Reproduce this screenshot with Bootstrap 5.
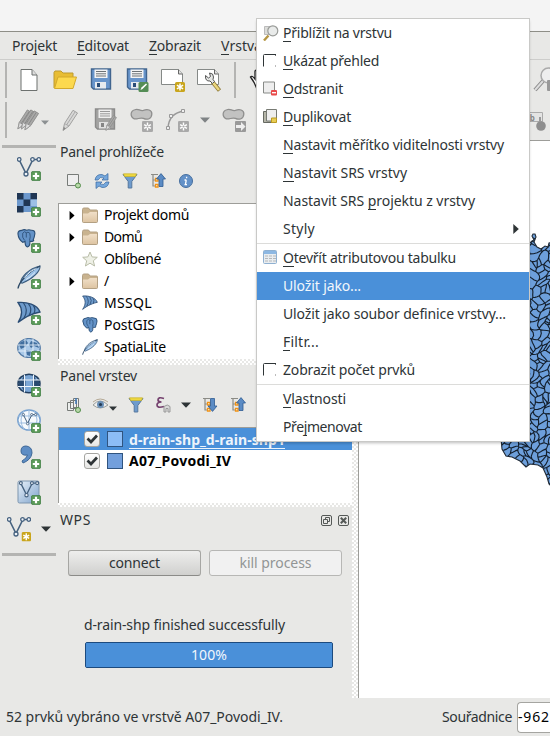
<!DOCTYPE html>
<html lang="cs">
<head>
<meta charset="utf-8">
<title>QGIS</title>
<link href="https://cdn.jsdelivr.net/npm/bootstrap@5.3.0/dist/css/bootstrap.min.css" rel="stylesheet">
<style>
body{width:550px;height:736px;overflow:hidden;background:#e8e8e6;color:#2e3436;font:14px/22px "Noto Sans","Open Sans",sans-serif}
svg{display:block;flex:none;overflow:visible}
.fit{white-space:pre;display:inline-block}
u{text-decoration:none;box-shadow:0 1px 0 #2e3436;display:inline-block;line-height:17px}
.titlebar{height:32px;background:#f4f4f4;border-bottom:1px solid #8e8e87}
.menubar{height:28px;border-bottom:1px solid #cdcdcb;padding-left:12px;gap:20px}
.tools{height:40px;padding-left:5px}
.grip{width:2px;height:36px;background:#b4b4b2;flex:none}
.cell36{width:36px;height:36px;display:flex;align-items:center;justify-content:center;flex:none}
.side{width:58px}
.hbar{height:3px;width:54px;background:#b4b4b2;margin-left:2px}
.panels{width:294px}
.ptitle{height:25px;padding:1px 0 0 2px}
.icons{height:33px;padding-left:8px}
.tree{height:156px;background:#fff;border:1px solid #9d9d99;border-width:1px 0 0 1px;color:#000}
.tree>div,.layers>div{height:22px}
.dots{background-color:#e8e8e6;background-image:radial-gradient(circle at 1px 1px,#fff 0 .8px,transparent 1px),radial-gradient(circle at 3px 3px,#fff 0 .8px,transparent 1px);background-size:4px 4px}
.layers{height:76px;background:#fff;border:1px solid #9d9d99;border-width:1px 0 0 1px;color:#000;font-weight:700}
.chk{width:16px;height:16px;border:1px solid #a5a5a1;border-radius:3px;background:linear-gradient(#fff,#e6e6e4)}
.swatch{width:16px;height:16px;border:1px solid #30547f;background:#729fdc;margin:0 6px 0 7px}
.picked{background:#4a90d9;color:#eef4fb}
.picked .swatch{background:#8cbdf6}
.picked .fit{box-shadow:0 1px 0 #eef4fb;line-height:17px}
.qbtn{width:133px;height:26px;padding:0;font-size:14px;line-height:22px;border:1px solid #a6a6a3;border-bottom-color:#8b8b88;border-radius:3px;background:linear-gradient(#eeeeed,#d0d0ce);color:#2e3436}
.qbtn:disabled{background:#f1f1f1;border-color:#b7b7b5;color:#929595;opacity:1}
.qbar{width:248px;height:26px;border:1px solid #1c4a7e;border-radius:2px;background:#4a90d9;font-size:14px}
.qbar .progress-bar{background:#4a90d9;color:#f2f7fc}
.map{border:1px solid #9d9d99;border-width:1px 0 0 1px;background:#fff;overflow:hidden}
.status{height:38px;padding-left:6px}
.coord{width:33px;height:31px;border:1px solid #a5a5a1;border-right:0;border-radius:4px 0 0 4px;background:#fff;color:#000}
.ctx{position:absolute;left:257px;top:19px;width:272px;min-width:0;height:422px;padding:0;margin:0;border:0;border-radius:0;background:#fff;font-size:14px;color:#2e3436;box-shadow:0 0 0 1px #c9c9c7,0 2px 3px #0004}
.ctx .dropdown-item{height:28px;padding:0 0 0 6px;display:flex;align-items:center;color:#2e3436;line-height:22px}
.ctx .dropdown-item.active{background:#4a90d9;color:#f2f7fc}
.ctx .dropdown-divider{margin:0;border-top:1px solid #dcdcda;opacity:1;height:1px}
.slot{width:20px;height:16px;flex:none}
.behind{position:absolute;left:526px;top:60px}
.hand{position:absolute;left:248px;top:66px}
</style>
<script src="https://cdn.jsdelivr.net/npm/bootstrap@5.3.0/dist/js/bootstrap.bundle.min.js"></script>
</head>
<body>
<svg width="0" height="0" class="position-absolute">
<defs>
<linearGradient id="sky" x2="1" y2="1"><stop stop-color="#e8f1fa"/><stop offset="1" stop-color="#7fa3cb"/></linearGradient>
<linearGradient id="fold" y2="1" x2="0"><stop stop-color="#f0dfc8"/><stop offset="1" stop-color="#dec5a3"/></linearGradient>
<symbol id="plus" viewBox="0 0 10 10"><rect x=".4" y=".4" width="9.2" height="9.2" rx="1.6" fill="#5b9a58" stroke="#3f7d44" stroke-width=".8"/><path d="M5 1.800v6.400M1.800 5h6.400" stroke="#fff" stroke-width="2.200"/></symbol>
<symbol id="star" viewBox="0 0 10 10"><rect width="10" height="10" rx="1.6" fill="#c9a51c"/><path d="M5 1.4v7.2M1.9 3.2l6.2 3.6M1.9 6.8l6.2-3.6" stroke="#fff" stroke-width="1.5"/></symbol>
<symbol id="gstar" viewBox="0 0 10 10"><rect width="10" height="10" rx="1.2" fill="#a9a9a9"/><path d="M5 1.4v7.2M1.9 3.2l6.2 3.6M1.9 6.8l6.2-3.6" stroke="#fff" stroke-width="1.3"/><circle cx="5" cy="5" r="1" fill="#a9a9a9"/></symbol>
<symbol id="vee" viewBox="0 0 24 24"><path d="M2.5 3.5 9 16.500 15.700 3M17 2.500h3" fill="none" stroke="#45617f" stroke-width="1.6"/><g fill="#eef2f7" stroke="#45617f" stroke-width="1.3"><circle cx="2.200" cy="2.500" r="1.800"/><circle cx="15.500" cy="2.500" r="1.800"/><circle cx="21.800" cy="2.500" r="1.800"/><circle cx="9" cy="17" r="2"/></g></symbol>
<symbol id="elephant" viewBox="0 0 20 20"><path d="M1 5Q1 1.500 5 1.500Q7.500 0 10 1.300Q12.500 .3 15 1.300Q19 1 18.800 5Q18.300 9 17 11.500Q18.500 12.500 16 13L13.500 12.800Q14 18.500 10.800 18.800Q8.500 18.500 8.500 13L6 14Q1.500 11 1 5Z" fill="#6493c8" stroke="#2b4f77" stroke-width="1.200"/><path d="M6 4.500Q5 9 8 12M13.500 4.500Q14.500 8 13.200 12M6 4.500Q8 1.500 9.800 4V9M13.500 4.500Q11.500 2.500 9.800 4" fill="none" stroke="#2b4f77" stroke-width=".9"/></symbol>
<symbol id="feather" viewBox="0 0 24 24"><path d="M3.500 17.500C4 13 11 3.500 23 1C23.500 6 16 14 5 18.200Z" fill="#9cc1e6" stroke="#3c5c7e" stroke-width="1.100"/><path d="M1 23.500C2 17 10 8 23 1" fill="none" stroke="#2e4a67" stroke-width="1.400"/><path d="M7.500 13C11 8 15 5 19.500 3.500M9 14.500Q14 12 18 7.500" stroke="#dcebf9" fill="none"/></symbol>
<symbol id="fin" viewBox="0 0 24 24"><path d="M1 1.500C10 .8 20 3.500 23 11C18 12 9 15 1 21.500C6 14 6 8 1 1.500Z" fill="#6e9bcc" stroke="#2b4d75" stroke-width="1.300"/><path d="M6.500 2Q12 9 7 17M11.500 2.800Q16 8 12 14.500M16.500 4.800Q19 8 17 12.500" fill="none" stroke="#2b4d75" stroke-width="1.200"/></symbol>
<symbol id="floppy" viewBox="0 0 22 22"><path d="M1.500 1H20.500V21H3.500L1.500 19Z" fill="#6895cb" stroke="#41658f" stroke-width="1.400"/><path d="M4.500 1.500h13v8.500h-13Z" fill="#f4f4f4"/><path d="M6 3.500h10M6 5.800h10M6 8h10" stroke="#6d7376"/><path d="M5 14h11v6.500H5Z" fill="#e7ebef"/><path d="M7 15h3v4H7Z" fill="#294d78"/></symbol>
<symbol id="gfloppy" viewBox="0 0 22 22"><path d="M1.500 1H20.500V21H3.500L1.500 19Z" fill="#a3a3a2" stroke="#8b8b8a" stroke-width="1.400"/><path d="M4.500 1.500h13v8.500h-13Z" fill="#eee"/><path d="M6 3.500h10M6 5.800h10M6 8h10" stroke="#999"/><path d="M5 14h11v6.500H5Z" fill="#e1e1e1"/><path d="M7 15h3v4H7Z" fill="#858585"/></symbol>
<symbol id="gpencil" viewBox="0 0 16 22"><path d="M1 21 2.500 14 11 .8 15.500 3.500 7 16.500Z" fill="#d8d8d7" stroke="#a0a09f"/><path d="M1 21l.8-3.500 2 1.300Z" fill="#888"/><path d="M4.500 15.500 13 2.500M2.500 14l4.500 2.500" stroke="#aaa"/></symbol>
<symbol id="dpencil" viewBox="0 0 16 22"><path d="M1 21 2.500 14 11 .8 15.500 3.500 7 16.500Z" fill="#a9a9a8" stroke="#8c8c8b"/><path d="M2.500 14 1 21l6-4.500Z" fill="#ddd" stroke="#999"/><path d="M4.500 15.500 13 2.500" stroke="#858585"/></symbol>
<symbol id="blob" viewBox="0 0 24 14"><path d="M5 1.500C9 0 10 3 14 2.200C18 .5 23 1.500 22.800 6C22.500 11 18 12.500 14 10.500C10 9 8 12 4.500 11C0 9 0 3 5 1.500Z" fill="#c2c2c1" stroke="#8e8e8d" stroke-width="1.300"/></symbol>
<symbol id="folder" viewBox="0 0 16 16"><path d="M.5 14.500V2.500Q.5 1 2 1H6.500L8 3H14.500Q15.500 3 15.500 4V14.500Q15.500 15.500 14.500 15.500H1.500Q.5 15.500.5 14.500Z" fill="#c9b38f" stroke="#b3a083"/><path d="M1 15V6.500H6L8 5H15V15Z" fill="url(#fold)"/></symbol>
<symbol id="funnel" viewBox="0 0 16 16"><path d="M1 1.500H15L9.800 8.500V15H6.200V8.500Z" fill="#6e9bcd" stroke="#56789f"/><path d="M1.500.8H14.500L13.500 3.500H2.500Z" fill="#eed840" stroke="#c9b32c" stroke-width=".7"/></symbol>
<symbol id="treeicon" viewBox="0 0 18 16"><path d="M1 1.500H8M3 1.500V13H6M3 7H6" stroke="#8b8b85" fill="none" stroke-width="1.200"/><path d="M5.500 5.500h2.500v2.500H5.500ZM5.500 11.500h2.500v2.500H5.500Z" fill="#fff" stroke="#f09216" stroke-width="1.300"/></symbol>
<symbol id="up" viewBox="0 0 10 14"><path d="M5 .6 9.500 6H7V13.500H3V6H.5Z" fill="#5b8bc4" stroke="#2e5c92" stroke-width=".8"/></symbol>
<symbol id="globe" viewBox="0 0 24 20"><ellipse cx="12" cy="10" rx="11.300" ry="9.500" fill="#aac9e8" stroke="#547ba6" stroke-width="1.200"/><path d="M4 4l5-2 2 3-3 4-4 2-2-4ZM14 3l6 2 2 5-5-2-3 2-2-3ZM9 12l5 1-1 5-3-1ZM16 12h4l-2 4Z" fill="#426f9f"/><path d="M1 7h22M1 13h22M8 1v18M16 1v18" stroke="#e7f1fb" stroke-width=".9"/></symbol>
<symbol id="globe2" viewBox="0 0 24 20"><ellipse cx="12" cy="10" rx="11" ry="9.300" fill="#7ca7d6" stroke="#233f60" stroke-width="1.500"/><path d="M2 6.500h20v6H2Z" fill="#294a70"/><path d="M8.500 6.500h7v6h-7Z" fill="#7ca7d6"/><path d="M8 1Q3 10 8 19M16 1Q21 10 16 19" fill="none" stroke="#294a70" stroke-width="1.500"/><path d="M1 6.500h22M1 13h22M7.500 1v18M16.500 1v18" stroke="#eff5fb" stroke-width="1.100"/></symbol>
<symbol id="globe3" viewBox="0 0 24 22"><ellipse cx="12" cy="11" rx="11.200" ry="10" fill="#f7fafd" stroke="#77a1cf" stroke-width="1.500"/><path d="M1 7h22M1 14h22M12 1v20M7 1.500Q1 11 7 20.500M17 1.500Q23 11 17 20.500" stroke="#9dbde0" fill="none"/></symbol>
<symbol id="tri" viewBox="0 0 10 6"><path d="M0 .5H10L5 5.800Z"/></symbol>
<symbol id="rtri" viewBox="0 0 6 10"><path d="M.3 0 5.800 5 .3 10Z"/></symbol>
<symbol id="tick" viewBox="0 0 14 14"><path d="M2.500 6.500 6 10 12 3.500" fill="none" stroke="#2e3436" stroke-width="2.700"/></symbol>
<symbol id="mini" viewBox="0 0 14 13"><path d="M13 .5H1.500Q.5.500.5 1.500V12.500" fill="none" stroke="#2e3436"/><path d="M12.500 11.500v1M12.500 1v1" stroke="#777"/></symbol>
<symbol id="lens" viewBox="0 0 16 16"><path d="M1.500 1.500h8v8h-8Z" fill="#dcddda" stroke="#bbb"/><path d="M1 15.500 5.500 10.500" stroke="#b59643" stroke-width="2.400"/><circle cx="9.800" cy="5.800" r="5" fill="#e9ebea" stroke="#999b98" stroke-width="1.200"/></symbol>
</defs>
</svg>

<div class="d-flex flex-column h-100 position-relative">
  <header class="titlebar"></header>
  <nav class="menubar d-flex align-items-center">
    <span class="fit" data-w="45">Pro<u>j</u>ekt</span><span class="fit" data-w="52"><u>E</u>ditovat</span><span class="fit" data-w="52"><u>Z</u>obrazit</span><span class="fit" data-w="41"><u>V</u>rstva</span>
  </nav>
  <div class="tools d-flex align-items-center">
    <div class="grip me-1"></div>
    <div class="cell36"><svg width="20" height="24"><path d="M2 1.500h11l5 5.500v15.500H2Z" fill="#fff" stroke="#6d716f"/><path d="M13 1.500V7h5" fill="#ddd" stroke="#6d716f"/></svg></div>
    <div class="cell36"><svg width="24" height="24"><path d="M1 20V4.500l1-1.500h6l2 2h10v4" fill="#e8bd34" stroke="#bd9a2e"/><path d="M1.500 20.500 5 9H23.500L20 20.500Z" fill="#fcd94f" stroke="#d3a92c"/></svg></div>
    <div class="cell36"><svg width="22" height="22"><use href="#floppy" y="-1" width="22" height="22"/></svg></div>
    <div class="cell36"><svg width="24" height="24"><use href="#floppy" x="1" y="0" width="22" height="22"/><rect x="13.500" y="14" width="10" height="10" rx="1.500" fill="#548d55"/><path d="M15.500 22l1-2.500 4.500-4 1 1-4.500 4.500Z" fill="#fff"/></svg></div>
    <div class="cell36"><svg width="24" height="24"><path d="M.5 1.500h17l4 4.500v10.500H.5Z" fill="#fff" stroke="#858987"/><path d="M17.500 1.500V6h4" fill="#ddd" stroke="#666"/><use href="#star" x="14" y="14" width="10" height="10"/></svg></div>
    <div class="cell36"><svg width="24" height="24"><path d="M.5 1.500h17l4 4.500v10.500H.5Z" fill="#fff" stroke="#858987"/><path d="M17.500 1.500V6h4" fill="#ddd" stroke="#666"/><path d="M15.500 14 22.500 22.500" stroke="#8b7634" stroke-width="4"/><path d="M15.500 14 22 22" stroke="#ecd77d" stroke-width="2.500"/><path d="M8.500 7.500l3 2.500 2-1.500-1-3.500q4 0 4 4l-.5 2.500 1.500 2-2 2-2.500-2.500q-5 .5-4.500-5.500Z" fill="#e4e6e4" stroke="#555"/></svg></div>
    <div class="grip" style="margin-left:7px"></div>
  </div>
  <div class="tools d-flex align-items-center">
    <div class="grip me-1"></div>
    <div class="cell36"><svg width="24" height="24"><use href="#dpencil" x="0" y="1" width="15" height="21"/><use href="#dpencil" x="3.500" y="1" width="15" height="21"/><use href="#dpencil" x="7" y="2" width="15" height="21"/></svg></div>
    <svg width="8" height="5" fill="#8c9092" class="mt-1" style="margin-left:-6px"><use href="#tri" width="8" height="5"/></svg>
    <div class="cell36" style="margin-left:3px"><svg width="16" height="23"><use href="#gpencil"/></svg></div>
    <div class="cell36"><svg width="24" height="24"><use href="#gfloppy" x="0" y="0" width="22" height="22"/><use href="#dpencil" x="11" y="7" width="12" height="16"/></svg></div>
    <div class="cell36"><svg width="24" height="24"><use href="#blob" width="23" height="14"/><use href="#gstar" x="12" y="13" width="11" height="11"/></svg></div>
    <div class="cell36"><svg width="24" height="24"><path d="M2 20Q3 5 18 3" fill="none" stroke="#999" stroke-width="1.500"/><g fill="#eee" stroke="#999"><path d="M.5 18.500h3v3h-3ZM3.500 6.500h3v3h-3ZM15.500 1.500h3v3h-3Z"/></g><use href="#gstar" x="12" y="13" width="11" height="11"/></svg></div>
    <svg width="10" height="6" fill="#7f8385" style="margin-left:4px"><use href="#tri"/></svg>
    <div class="cell36" style="margin-left:6px"><svg width="24" height="24"><use href="#blob" width="23" height="14"/><rect x="13" y="13" width="11" height="11" rx="1" fill="#999"/><path d="M14 17h5v-3l4.500 4.500L19 23v-3h-5Z" fill="#eee"/></svg></div>
  </div>

  <div class="d-flex flex-grow-1" style="min-height:0">
    <aside class="side">
      <div class="hbar" style="margin-top:5px;margin-bottom:3px"></div>
      <div id="sidebar"></div>
      <div class="d-flex align-items-center" style="height:36px;padding-left:7px"><svg width="24" height="24"><use href="#vee" width="24" height="24"/><use href="#star" x="14.500" y="15" width="9.500" height="9.500"/></svg><svg width="10" height="6" fill="#2e3436" style="margin-left:10px"><use href="#tri"/></svg></div>
      <div class="hbar" style="margin-top:6px"></div>
    </aside>

    <main class="panels">
      <div class="ptitle"><span class="fit" data-w="104">Panel prohlížeče</span></div>
      <div class="icons d-flex align-items-center" style="gap:12px;height:32px;margin-bottom:6px">
        <svg width="16" height="16"><path d="M1.500 1.500h11v11h-11Z" fill="#eee" stroke="#777b78"/><circle cx="12" cy="12.500" r="2.500" fill="#b7d8a9" stroke="#548d4b"/></svg>
        <svg width="16" height="16"><path d="M1 7Q2 1 8 1.500L11 3 14 .5V7H8L10 5Q6 3 4 7Z" fill="#75a7dc" stroke="#3868a0" stroke-width=".7"/><path d="M15 9Q14 15 8 14.500L5 13 2 15.500V9H8L6 11Q10 13 12 9Z" fill="#75a7dc" stroke="#3868a0" stroke-width=".7"/></svg>
        <svg width="16" height="16"><use href="#funnel"/></svg>
        <svg width="16" height="16"><use href="#treeicon" width="18" height="16"/><use href="#up" x="6" width="10" height="14"/></svg>
        <svg width="16" height="16"><circle cx="8" cy="8" r="6.500" fill="#6391c8" stroke="#466f9f"/><path d="M8.300 7 7.300 12M8.600 3.800v1.500M6.500 7H8.300M6.500 11.700h2.500" stroke="#fff" stroke-width="1.300"/></svg>
      </div>
      <div class="tree" id="tree"></div>
      <div class="dots" style="height:6px"></div>
      <div class="ptitle" style="height:26px;padding-top:0"><span class="fit" data-w="77">Panel vrstev</span></div>
      <div class="icons d-flex align-items-center" style="height:28px;margin-bottom:8px">
        <svg width="16" height="16"><path d="M1.500 5.500h6v8h-6ZM4.500 3.500h6v8h-6ZM7.500 1.500h5v9h-5Z" fill="#eceeec" stroke="#777b78"/><path d="M10 1v6" stroke="#3f76b4" stroke-width="1.500"/><circle cx="12" cy="13" r="2.500" fill="#b7d8a9" stroke="#548d4b"/></svg>
        <svg width="26" height="16" style="margin-left:10px"><path d="M1 8Q8 0 16 8Q8 14 1 8Z" fill="#eee" stroke="#999c98"/><circle cx="8.500" cy="7.500" r="3.500" fill="#6a90b8"/><circle cx="8.500" cy="7.500" r="1.600" fill="#243a52"/><path d="M1 5Q8-1 16 5" fill="none" stroke="#b5a995"/><use href="#tri" x="17" y="9" width="8" height="5" fill="#2e3436"/></svg>
        <svg width="16" height="16" style="margin-left:10px"><use href="#funnel"/></svg>
        <svg width="16" height="16" style="margin-left:12px"><path d="M8 1.500Q2-.5 2 3Q2 5 5.500 5Q1 5 1 8Q1 11.500 8 9.500" fill="none" stroke="#74406e" stroke-width="1.700"/><path d="M8 15V9.500q3.500-3 6 0V15h-2v-3.500h-2V15Z" fill="#d9d9d9" stroke="#999"/></svg>
        <svg width="10" height="6" fill="#2e3436" style="margin-left:9px"><use href="#tri"/></svg>
        <svg width="16" height="16" style="margin-left:11px"><use href="#treeicon" width="18" height="16"/><use href="#up" width="10" height="14" transform="translate(15.500 15) rotate(180)"/></svg>
        <svg width="16" height="16" style="margin-left:12px"><use href="#treeicon" width="18" height="16"/><use href="#up" x="6" width="10" height="14"/></svg>
      </div>
      <div class="layers">
        <div class="picked d-flex align-items-center" style="padding-left:25px"><span class="chk"><svg width="14" height="14"><use href="#tick"/></svg></span><span class="swatch"></span><span class="fit" data-w="156">d-rain-shp_d-rain-shp1</span></div>
        <div class="d-flex align-items-center" style="padding-left:25px"><span class="chk"><svg width="14" height="14"><use href="#tick"/></svg></span><span class="swatch"></span><span class="fit" data-w="102">A07_Povodi_IV</span></div>
      </div>
      <div class="dots" style="height:4px"></div>
      <div class="d-flex align-items-center" style="height:26px;padding:0 3px 0 2px"><span class="fit me-auto" data-w="31">WPS</span>
        <svg width="11" height="11" style="margin-right:6px" fill="none" stroke="#555957"><rect x=".5" y=".5" width="10" height="10" rx="1.500"/><path d="M2.500 4.500h4v4h-4ZM4.500 4.500v-2h4v4h-2"/></svg>
        <svg width="11" height="11" fill="none" stroke="#555957"><rect x=".5" y=".5" width="10" height="10" rx="1.500"/><path d="M2.800 2.800l5.400 5.400M8.200 2.800 2.800 8.200" stroke-width="2"/></svg></div>
      <div class="d-flex" style="padding:17px 0 0 10px;gap:8px"><button class="btn qbtn"><span class="fit" data-w="51">connect</span></button><button class="btn qbtn" disabled><span class="fit" data-w="72">kill process</span></button></div>
      <div style="padding:38px 0 6px 26px"><span class="fit" data-w="201">d-rain-shp finished successfully</span></div>
      <div class="progress qbar" style="margin-left:27px"><div class="progress-bar w-100"><span class="mx-auto fit" data-w="36">100%</span></div></div>
    </main>
    <div class="dots" style="width:6px"></div>
    <section class="map flex-grow-1"><svg width="191" height="557" id="map"></svg></section>
  </div>
  <footer class="status d-flex align-items-center"><span class="fit me-auto" data-w="277">52 prvků vybráno ve vrstvě A07_Povodi_IV.</span><span class="fit" data-w="70" style="margin-right:5px">Souřadnice</span><div class="coord d-flex align-items-center overflow-hidden"><span class="fit" data-w="32">-962</span></div></footer>

  <svg class="hand" width="14" height="30"><path d="M10 27Q8 18 2.500 11Q4 9 7 13V5Q9 3 10.500 5" fill="#fff" stroke="#222" stroke-width="1.300"/></svg>
  <svg class="behind" width="24" height="80"><path d="M9 30 17 21" stroke="#888" stroke-width="4"/><path d="M9 30 17 21" stroke="#ddd" stroke-width="2"/><circle cx="22.500" cy="15.500" r="7.500" fill="#eee" stroke="#aaa" stroke-width="1.500"/><rect x="21" y="20" width="8" height="11" rx="1" fill="#999"/><path d="M0 52.500h16.500v9H0" fill="#e4e4e3" stroke="#aaa"/><text x="-1" y="60.500" font-size="8" font-weight="700" fill="#888">ab</text><circle cx="15" cy="66" r="4.800" fill="#8e8e8e"/><path d="M14 61v-4" stroke="#999" stroke-width="2"/></svg>

  <div class="dropdown-menu show ctx" id="ctx"></div>
</div>

<script>
// [text with _ before the mnemonic, width, icon, state]
const ico={
 lens:'<svg width="16" height="16"><use href="#lens"/></svg>',
 box:'<svg width="14" height="13" style="margin-top:1px"><use href="#mini"/></svg>',
 del:'<svg width="16" height="16"><path d="M.5 1h11v11h-11Z" fill="#eee" stroke="#888b88"/><rect x="8" y="9" width="6" height="5.500" rx="1" fill="#e84a4a"/><path d="M9 11.700h4" stroke="#fff" stroke-width="1.300"/></svg>',
 dup:'<svg width="16" height="16"><path d="M.5 2.500h10v11h-10Z" fill="#b5b5a8" stroke="#666962"/><path d="M3.500 .5h10v11.500h-10Z" fill="#eee" stroke="#777a73"/><path d="M8.500 9h5v4.500h-5Z" fill="#e9cd54" stroke="#bb9b23"/></svg>',
 tab:'<svg width="16" height="16"><rect x=".5" y=".5" width="13" height="13" rx="1" fill="#e9edf0" stroke="#8fb0d1"/><path d="M1 1h12v3H1Z" fill="#8db8e3"/><path d="M2 6h3M6 6h3M10 6h3M2 8.500h3M6 8.500h3M10 8.500h3M2 11h3M6 11h3M10 11h3" stroke="#b5b8bb"/></svg>'};
const mn=s=>s.replace(/_(.)/,'<u>$1</u>');
document.getElementById('ctx').innerHTML=[
 ['_Přiblížit na vrstvu',109,'lens'],['_Ukázat přehled',96,'box'],['_Odstranit',60,'del'],['_Duplikovat',68,'dup'],
 ['_Nastavit měřítko viditelnosti vrstvy',221],['_Nastavit SRS vrstvy',124],['Nastavit SRS _projektu z vrstvy',192],['Styly',32,'','sub'],0,
 ['_Otevřít atributovou tabulku',173,'tab'],['Uložit jako...',78,'','active'],['Uložit jako soubor definice vrstvy...',223],['_Filtr...',36],['Zobrazit počet prvků',132,'box'],0,
 ['_Vlastnosti',63],['Pře_jmenovat',79]
].map(r=>r?`<a class="dropdown-item ${r[3]||''}"><span class="slot">${ico[r[2]]||''}</span><span class="fit" data-w="${r[1]}">${mn(r[0])}</span>${r[3]=='sub'?'<svg width="6" height="10" class="ms-auto" style="margin-right:10px" fill="#2e3436"><use href="#rtri"/></svg>':''}</a>`:'<hr class="dropdown-divider">').join('');

const use=(id,h=16)=>`<svg width="16" height="${h}"><use href="#${id}" width="16" height="${h}"/></svg>`;
const starIcon='<svg width="16" height="16"><path d="M8 1l2.100 4.900 5.200.4-4 3.500 1.300 5.200L8 12.200 3.400 15l1.300-5.200-4-3.500 5.200-.4Z" fill="#eef0e6" stroke="#b9bda8"/></svg>';
document.getElementById('tree').innerHTML=[['Projekt domů',85,use('folder'),1],['Domů',38,use('folder'),1],['Oblíbené',57,starIcon],['/',5,use('folder'),1],['MSSQL',48,use('fin')],['PostGIS',51,use('elephant')],['SpatiaLite',62,use('feather')]]
 .map(r=>`<div class="d-flex align-items-center"><span style="width:23px;padding-left:10px">${r[3]?'<svg width="6" height="9"><use href="#rtri" width="6" height="9"/></svg>':''}</span>${r[2]}<span class="fit" style="margin-left:6px" data-w="${r[1]}">${r[0]}</span></div>`).join('');

const raster='<path d="M0 0h20v19H0Z" fill="#6c98cd"/><path d="M0 0h6.500v6.500H0ZM13.500 0H20v6.500h-6.500ZM6.500 6.500h7V13h-7ZM0 13h6.500v6.500H0Z" fill="#1f3654"/><path d="M13.500 6.500H20V13h-6.500Z" fill="#9cbfe6"/>';
document.getElementById('sidebar').innerHTML=[
 '<use href="#vee" width="24" height="24"/>',raster,'<use href="#elephant" width="19" height="19"/>','<use href="#feather" width="24" height="24"/>','<use href="#fin" width="24" height="24"/>',
 '<use href="#globe" y="1" width="24" height="20"/>','<use href="#globe2" y="0" width="24" height="21"/>','<use href="#globe3" width="24" height="22"/><use href="#vee" x="4" y="4" width="17" height="15"/>',
 '<path d="M4 6Q4 1 9 1Q15 1.500 15 8Q14 15 6 18L5 16Q10 13 10.500 10Q4 11 4 6Z" fill="#5e8dc4" stroke="#3d6797"/>',
 '<rect x="1" y="0" width="21" height="22" rx="1.500" fill="url(#sky)" stroke="#7d95ae"/><use href="#vee" x="1" y="0" width="22" height="20"/>'
].map(s=>`<div class="cell36" style="margin-left:11px"><svg width="24" height="24">${s}<use href="#plus" x="14" y="14" width="10" height="10"/></svg></div>`).join('');

// Watershed polygons: Voronoi cells clipped to the basin outline.
(()=>{
 let seed=11;const rnd=()=>(seed=(seed*16807)%2147483647)/2147483647;
 const ox=359,oy=141,pts=[];
 for(let y=225;y<495;y+=7)for(let x=494;x<562;x+=7)if(rnd()>.1)pts.push([x+rnd()*15-4-ox,y+rnd()*15-4-oy]);
 let d='';
 for(const p of pts){
  let poly=[[p[0]-16,p[1]-16],[p[0]+16,p[1]-16],[p[0]+16,p[1]+16],[p[0]-16,p[1]+16]];
  for(const q of pts){ if(q===p)continue;
   const nx=q[0]-p[0],ny=q[1]-p[1]; if(nx*nx+ny*ny>1500)continue;
   const c=(q[0]*q[0]+q[1]*q[1]-p[0]*p[0]-p[1]*p[1])/2,out=[];
   poly.forEach((a,i)=>{const b=poly[(i+1)%poly.length],da=a[0]*nx+a[1]*ny-c,db=b[0]*nx+b[1]*ny-c;
    if(da<=0)out.push(a);
    if(da*db<0){const t=da/(da-db);out.push([a[0]+(b[0]-a[0])*t,a[1]+(b[1]-a[1])*t]);}});
   poly=out; if(!poly.length)break;}
  // a smooth warp bends the cells so that neighbours still share edges
  const warp=([x,y])=>[x+2.500*Math.sin(y/5)+Math.sin(y/2.300),y+2.500*Math.sin(x/4.500)];
  if(poly.length){const q=[];poly.forEach((a,i)=>{const b=poly[(i+1)%poly.length];for(let k=0;k<3;k++)q.push(warp([a[0]+(b[0]-a[0])*k/3,a[1]+(b[1]-a[1])*k/3]));});
   d+='M'+q.map(a=>a[0].toFixed(1)+' '+a[1].toFixed(1)).join('L')+'Z';}
 }
 const o='M520 240L530 243L532 241L534 240L532 236L533 234L535 234L536 237L534 242L537 247L541 249L545 246L548 247L549 243L555 242V490L549 484L547 477L543 468L538 465L530 464L526 467L520 461L512 457L506 456L502 449L501 438L520 430Z';
 document.getElementById('map').innerHTML=`<g><clipPath id="basin"><path d="${o}" transform="translate(${-ox} ${-oy})"/></clipPath><g clip-path="url(#basin)"><path d="${d}" fill="#6d9fdb" stroke="#14202e" stroke-width="1.150" stroke-linejoin="round"/></g><path d="${o}" transform="translate(${-ox} ${-oy})" fill="none" stroke="#222c38" stroke-width="1.100"/></g>`;
})();

// Spread each label over its measured width.
document.querySelectorAll('.fit').forEach(e=>{
 const n=e.textContent.length,w=e.getBoundingClientRect().width;
 e.style.letterSpacing=((+e.dataset.w-w)/n).toFixed(3)+'px';
});
</script>
</body>
</html>
